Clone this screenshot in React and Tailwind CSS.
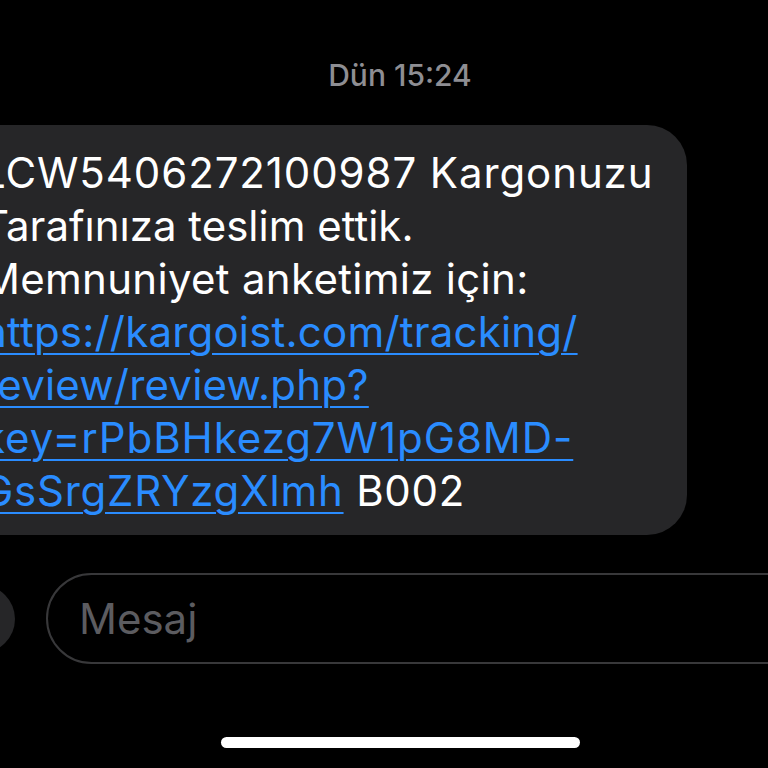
const lines = [
    { cls: 'tracking-[0.9px]', segs: [{ t: 'LCW5406272100987 Kargonuzu' }] },
    { cls: 'tracking-[0px]', segs: [{ t: 'Tarafınıza teslim ettik.' }] },
    { cls: 'tracking-[0.3px]', segs: [{ t: 'Memnuniyet anketimiz için:' }] },
    { cls: 'tracking-[0.2px]', segs: [{ t: 'https://kargoist.com/tracking/', link: true }] },
    { cls: 'tracking-[0.2px]', segs: [{ t: 'review/review.php?', link: true }] },
    { cls: 'tracking-[0.95px]', segs: [{ t: 'key=rPbBHkezg7W1pG8MD-', link: true }] },
    { cls: 'tracking-[0.75px]', segs: [{ t: 'GsSrgZRYzgXlmh', link: true }, { t: ' B002' }] },
];

const App = () => {
    return (
        <div className="w-[768px] h-[768px] bg-black overflow-hidden" style={{ fontFamily: 'Inter, "Noto Sans", sans-serif' }}>
            <div className="-ml-[60px] w-[920px] flex flex-col">
                {/* timestamp */}
                <div className="pt-[57px] flex justify-center">
                    <span className="text-[30px] leading-[36px] font-medium text-[#8e8e93]">Dün 15:24</span>
                </div>

                {/* incoming bubble */}
                <div className="mt-[32px] ml-[10px] w-[737px] rounded-[40px] bg-[#262628] pl-[32px] pt-[21px] pb-[18px] text-[42px] leading-[53px] text-white">
                    {lines.map((line, i) => (
                        <div key={i} className={`whitespace-nowrap ${line.cls}`}>
                            {line.segs.map((seg, j) =>
                                seg.link ? (
                                    <span key={j} className="text-[#2a8cff] underline decoration-2 underline-offset-[6px]">
                                        {seg.t}
                                    </span>
                                ) : (
                                    <span key={j}>{seg.t}</span>
                                )
                            )}
                        </div>
                    ))}
                </div>

                {/* input row */}
                <div className="mt-[38px] flex items-center">
                    <div className="ml-[7px] w-[68px] h-[68px] rounded-full bg-[#262628] shrink-0" />
                    <div className="ml-[31px] w-[820px] h-[91px] rounded-full border-2 border-[#38383a] flex items-center pl-[31px] shrink-0">
                        <span className="text-[42px] text-[#5c5c60]">Mesaj</span>
                    </div>
                </div>

                {/* home indicator */}
                <div className="mt-[73px] flex justify-center">
                    <div className="w-[359px] h-[11px] rounded-full bg-white" />
                </div>
            </div>
        </div>
    );
};

export default App;
